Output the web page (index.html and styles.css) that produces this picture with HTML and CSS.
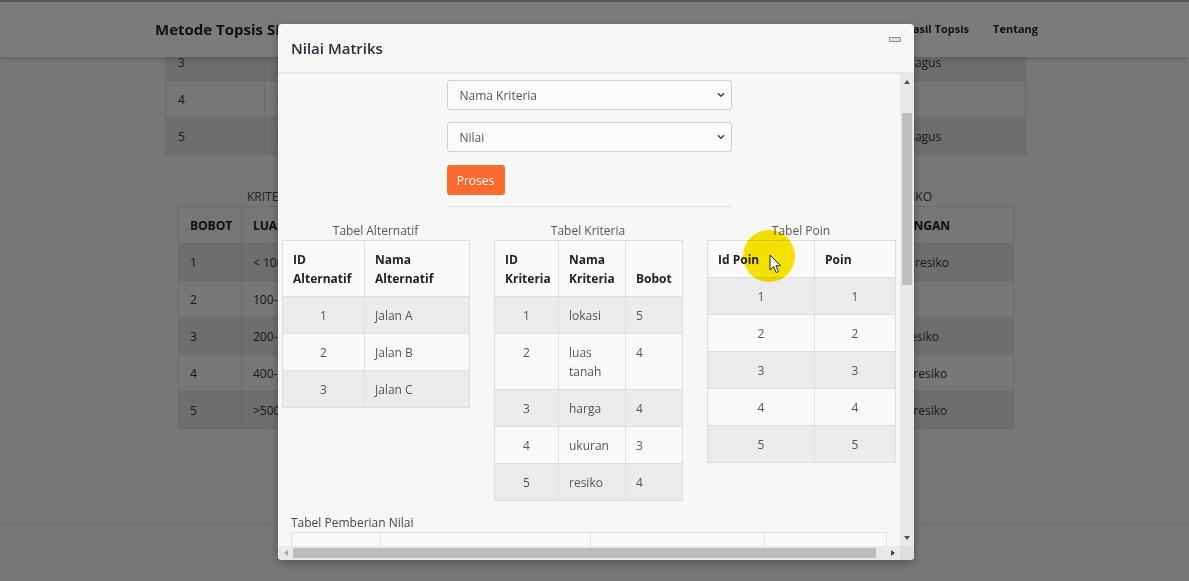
FILE: index.html
```html
<!DOCTYPE html>
<html lang="id">
<head>
<meta charset="utf-8">
<title>Metode Topsis</title>
<link rel="stylesheet" href="styles.css">
</head>
<body>
<header class="navbar">
  <div class="brand">Metode Topsis SPK</div>
  <nav class="nav">
    <a>Alternatif</a>
    <a>Kriteria</a>
    <a>Nilai Matriks</a>
    <a>Hasil Topsis</a>
    <a>Tentang</a>
  </nav>
</header>

<main class="page">
  <table class="bg-table bg-t1">
    <colgroup><col class="b1c1"><col class="b1c2"><col class="b1c3"><col class="b1c4"></colgroup>
    <tbody>
      <tr class="dark"><td>3</td><td>C</td><td></td><td>Sangat Bagus</td></tr>
      <tr><td>4</td><td>R</td><td></td><td>Cukup</td></tr>
      <tr class="dark"><td>5</td><td>S</td><td></td><td>Sangat Bagus</td></tr>
    </tbody>
  </table>

  <div class="bg-caption"><span>KRITERIA</span><span>RESIKO</span></div>
  <table class="bg-table bg-t2">
    <colgroup><col class="b2c1"><col class="b2c2"><col class="b2c3"><col class="b2c4"></colgroup>
    <thead>
      <tr><th>BOBOT</th><th>LUAS</th><th></th><th>KETERANGAN</th></tr>
    </thead>
    <tbody>
      <tr class="dark"><td>1</td><td>&lt; 100</td><td></td><td>Rendah resiko</td></tr>
      <tr><td>2</td><td>100-</td><td></td><td>Aman</td></tr>
      <tr class="dark"><td>3</td><td>200-</td><td></td><td>Tinggi resiko</td></tr>
      <tr><td>4</td><td>400-</td><td></td><td>Sedang resiko</td></tr>
      <tr class="dark"><td>5</td><td>&gt;500</td><td></td><td>Sedang resiko</td></tr>
    </tbody>
  </table>
</main>
<footer class="footer"></footer>

<div class="overlay">
  <section class="modal">
    <div class="modal-head">
      <h2 class="modal-title">Nilai Matriks</h2>
      <span class="min-icon"></span>
    </div>
    <div class="modal-body">
      <div class="scroll-content">
        <div class="form">
          <div class="select"><span>Nama Kriteria</span>
            <svg class="chev" width="8" height="6" viewBox="0 0 8 6"><polyline points="1,1.2 4,4.2 7,1.2" fill="none" stroke="#444" stroke-width="1.5"/></svg>
          </div>
          <div class="select"><span>Nilai</span>
            <svg class="chev" width="8" height="6" viewBox="0 0 8 6"><polyline points="1,1.2 4,4.2 7,1.2" fill="none" stroke="#444" stroke-width="1.5"/></svg>
          </div>
          <button class="btn">Proses</button>
          <div class="rule"></div>
        </div>

        <div class="tables">
          <div class="tbl w187">
            <div class="cap">Tabel Alternatif</div>
            <table class="dt">
              <colgroup><col class="w82"><col class="w105"></colgroup>
              <thead><tr><th>ID<br>Alternatif</th><th>Nama<br>Alternatif</th></tr></thead>
              <tbody>
                <tr><td class="c">1</td><td>Jalan A</td></tr>
                <tr><td class="c">2</td><td>Jalan B</td></tr>
                <tr><td class="c">3</td><td>Jalan C</td></tr>
              </tbody>
            </table>
          </div>

          <div class="tbl w188">
            <div class="cap">Tabel Kriteria</div>
            <table class="dt">
              <colgroup><col class="w64"><col class="w67"><col class="w57"></colgroup>
              <thead><tr><th>ID<br>Kriteria</th><th>Nama<br>Kriteria</th><th>Bobot</th></tr></thead>
              <tbody>
                <tr><td class="c">1</td><td>lokasi</td><td>5</td></tr>
                <tr><td class="c">2</td><td>luas<br>tanah</td><td>4</td></tr>
                <tr><td class="c">3</td><td>harga</td><td>4</td></tr>
                <tr><td class="c">4</td><td>ukuran</td><td>3</td></tr>
                <tr><td class="c">5</td><td>resiko</td><td>4</td></tr>
              </tbody>
            </table>
          </div>

          <div class="tbl w188">
            <div class="cap">Tabel Poin</div>
            <table class="dt">
              <colgroup><col class="w107"><col class="w81"></colgroup>
              <thead><tr><th>Id Poin</th><th>Poin</th></tr></thead>
              <tbody>
                <tr><td class="c">1</td><td class="c">1</td></tr>
                <tr><td class="c">2</td><td class="c">2</td></tr>
                <tr><td class="c">3</td><td class="c">3</td></tr>
                <tr><td class="c">4</td><td class="c">4</td></tr>
                <tr><td class="c">5</td><td class="c">5</td></tr>
              </tbody>
            </table>
          </div>
        </div>

        <div class="nilai">
          <div class="cap-left">Tabel Pemberian Nilai</div>
          <table class="dt wide">
            <colgroup><col class="w89"><col class="w210"><col class="w174"><col class="w122"></colgroup>
            <thead><tr><th>&nbsp;</th><th>&nbsp;</th><th>&nbsp;</th><th>&nbsp;</th></tr></thead>
          </table>
        </div>
      </div>

      <div class="vbar">
        <div class="sb-btn"><span class="tri-up"></span></div>
        <div class="vtrack"><div class="vthumb"></div></div>
        <div class="sb-btn"><span class="tri-down"></span></div>
      </div>
      <div class="hbar">
        <div class="hbtn"><span class="tri-left"></span></div>
        <div class="htrack"><div class="hthumb"></div></div>
        <div class="hbtn"><span class="tri-right"></span></div>
      </div>
      <div class="corner"></div>
    </div>
  </section>
</div>

<div class="click-spot"></div>
<svg class="pointer" width="13" height="20" viewBox="0 0 13 20">
  <path d="M1 1 L1 16 L4.6 12.6 L7.2 18.6 L9.4 17.6 L6.9 11.8 L11.6 11.8 Z" fill="#fff" stroke="#222" stroke-width="1" stroke-linejoin="round"/>
</svg>
</body>
</html>
```

FILE: styles.css
```css
* { box-sizing: border-box; }

html, body {
  margin: 0;
  padding: 0;
}

body {
  background: #eeeeee;
  font-family: "Open Sans", "Noto Sans", "Liberation Sans", sans-serif;
  color: #333;
  width: 1189px;
  height: 581px;
  overflow: hidden;
}

/* ---------- background page ---------- */
.navbar {
  position: fixed;
  top: 0;
  left: 0;
  right: 0;
  height: 57px;
  background: #f6f6f6;
  border-top: 2px solid #aaaaaa;
  box-shadow: 0 2px 6px rgba(0, 0, 0, 0.18);
  display: flex;
  align-items: center;
  justify-content: space-between;
  padding: 0 151px 2px 155px;
  z-index: 2;
}

.brand {
  font-size: 15px;
  font-weight: 700;
  color: #222;
}

.nav {
  display: flex;
  gap: 24px;
}

.nav a {
  font-size: 11px;
  font-weight: 700;
  color: #222;
}

.page {
  padding-top: 43px;
}

.bg-table {
  border-collapse: collapse;
  table-layout: fixed;
  font-size: 12px;
  line-height: 19px;
  color: #333;
}

.bg-table td,
.bg-table th {
  border: 1px solid #d6d6d6;
  padding: 9px 12px 8px;
  text-align: left;
  white-space: nowrap;
  overflow: hidden;
}

.bg-table th {
  font-weight: 700;
  color: #222;
}

.bg-table tr.dark td {
  background: #dcdcdc;
}

.bg-t1 {
  margin-left: 165px;
  width: 860px;
}

.b1c1 { width: 99px; }
.b1c2 { width: 295px; }
.b1c3 { width: 294px; }
.b1c4 { width: 172px; }

.bg-caption {
  margin: 33px 0 0 178px;
  width: 835px;
  padding: 0 81px 0 69px;
  display: flex;
  justify-content: space-between;
  font-size: 12px;
  line-height: 18px;
  color: #444;
}

.bg-t2 {
  margin-left: 178px;
  width: 835px;
}

.bg-t2 th,
.bg-t2 td {
  padding-left: 11px;
}

.b2c1 { width: 63px; }
.b2c2 { width: 308px; }
.b2c3 { width: 308px; }
.b2c4 { width: 156px; }

.footer {
  margin-top: 94px;
  border-top: 1px solid #dadada;
  height: 60px;
}

/* ---------- overlay & modal ---------- */
.overlay {
  position: fixed;
  inset: 0;
  background: rgba(0, 0, 0, 0.5);
  display: flex;
  justify-content: center;
  align-items: flex-start;
  padding-top: 24px;
  z-index: 10;
}

.modal {
  margin-left: 3px;
  width: 636px;
  height: 536px;
  background: #f7f7f5;
  border-radius: 4px;
  box-shadow: 0 3px 10px rgba(0, 0, 0, 0.3);
  display: grid;
  grid-template-rows: 50px 1fr;
  overflow: hidden;
}

.modal-head {
  display: flex;
  justify-content: space-between;
  align-items: center;
  padding: 0 13px;
  border-bottom: 2px solid #e7e7e5;
}

.modal-title {
  margin: 0;
  font-size: 15px;
  font-weight: 600;
  color: #27303a;
}

.min-icon {
  align-self: flex-start;
  margin-top: 13px;
  width: 12px;
  height: 5px;
  border: 1px solid #8a8a8a;
  background: #e2e2e2;
  border-radius: 1px;
}

.modal-body {
  display: grid;
  grid-template-columns: 1fr 14px;
  grid-template-rows: 1fr 14px;
  min-height: 0;
}

.scroll-content {
  overflow: hidden;
  padding-top: 6px;
  min-height: 0;
}

.form {
  width: 285px;
  margin: 0 auto;
}

.select {
  height: 30px;
  border: 1px solid #cfcfcf;
  border-radius: 3px;
  background: #fbfbfb;
  display: flex;
  align-items: center;
  justify-content: space-between;
  padding: 0 6px 0 12px;
  font-size: 12px;
  color: #555;
  margin-bottom: 12px;
}

.select + .select {
  margin-bottom: 13px;
}

.chev {
  display: block;
}

.btn {
  display: block;
  width: 58px;
  height: 30px;
  border: 0;
  border-radius: 3px;
  background: #fc6a30;
  color: #fff;
  font-family: inherit;
  font-size: 12px;
  padding: 0;
}

.rule {
  margin-top: 11px;
  height: 1px;
  background: #e2e2e0;
}

.tables {
  display: flex;
  align-items: flex-start;
  gap: 25px;
  padding-left: 4px;
  margin-top: 15px;
}

.w187 { width: 187px; flex: none; }
.w188 { width: 188px; flex: none; }

.cap {
  text-align: center;
  font-size: 12px;
  line-height: 18px;
  color: #555;
}

.dt {
  width: 100%;
  border-collapse: collapse;
  table-layout: fixed;
  font-size: 12px;
  line-height: 19px;
}

.dt th,
.dt td {
  border: 1px solid #dedede;
  padding: 9px 10px 8px;
  text-align: left;
}

.dt th {
  vertical-align: bottom;
  font-weight: 700;
  color: #222;
  background: #fafafa;
}

.dt td {
  vertical-align: top;
  color: #555;
}

.dt tbody tr:nth-child(odd) td {
  background: #ebebeb;
}

.dt tbody tr:nth-child(even) td {
  background: #f9f9f9;
}

.dt td.c {
  text-align: center;
}

.w82 { width: 82px; }
.w105 { width: 105px; }
.w64 { width: 64px; }
.w67 { width: 67px; }
.w57 { width: 57px; }
.w107 { width: 107px; }
.w81 { width: 81px; }
.w89 { width: 89px; }
.w210 { width: 210px; }
.w174 { width: 174px; }
.w122 { width: 122px; }

.nilai {
  margin-top: 13px;
  padding-left: 13px;
}

.cap-left {
  font-size: 12px;
  line-height: 18px;
  color: #444;
}

.dt.wide {
  width: 595px;
}

.dt.wide th {
  background: #f9f9f7;
  border-color: #e2e2e0;
}

/* fake scrollbars */
.vbar {
  background: #e9e9e8;
  display: flex;
  flex-direction: column;
}

.sb-btn {
  height: 16px;
  display: flex;
  align-items: center;
  justify-content: center;
}

.vtrack {
  flex: 1;
}

.vthumb {
  margin: 23px auto 0;
  width: 10px;
  height: 172px;
  background: #bdbdbd;
}

.hbar {
  background: #e9e9e8;
  display: flex;
}

.hbtn {
  width: 15px;
  display: flex;
  align-items: center;
  justify-content: center;
}

.htrack {
  flex: 1;
  padding-top: 2px;
}

.hthumb {
  width: 583px;
  height: 10px;
  background: #bcbcbc;
}

.corner {
  background: #dfdfde;
}

.tri-up {
  border-left: 3px solid transparent;
  border-right: 3px solid transparent;
  border-bottom: 4px solid #505050;
}

.tri-down {
  border-left: 3px solid transparent;
  border-right: 3px solid transparent;
  border-top: 4px solid #505050;
}

.tri-left {
  border-top: 3px solid transparent;
  border-bottom: 3px solid transparent;
  border-right: 4px solid #a8a8a8;
}

.tri-right {
  border-top: 3px solid transparent;
  border-bottom: 3px solid transparent;
  border-left: 4px solid #404040;
}

/* cursor highlight */
.click-spot {
  position: fixed;
  left: 743px;
  top: 230px;
  width: 52px;
  height: 52px;
  border-radius: 50%;
  background: #f8e600;
  mix-blend-mode: multiply;
  z-index: 20;
}

.pointer {
  position: fixed;
  left: 769px;
  top: 254px;
  z-index: 21;
}
```
